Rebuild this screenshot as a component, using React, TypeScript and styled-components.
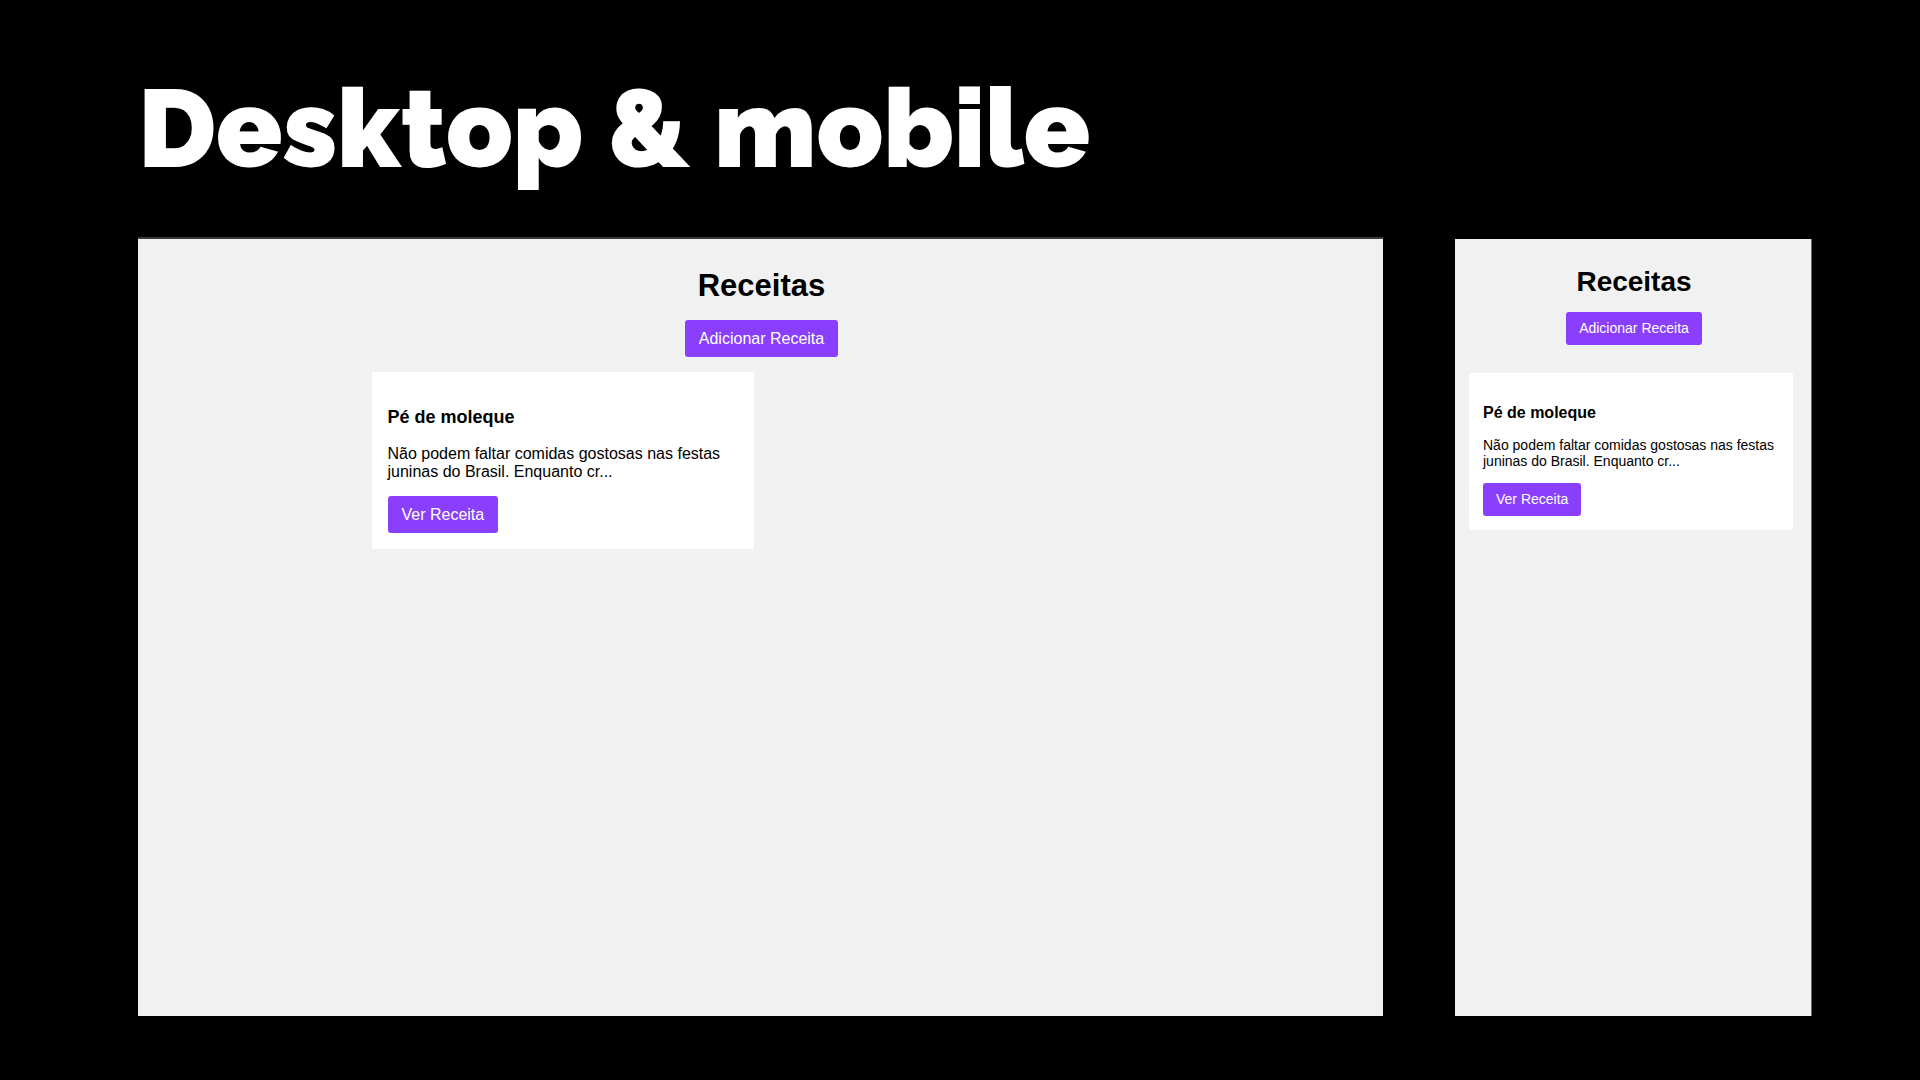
import React from "react";
import styled, { createGlobalStyle, css } from "styled-components";

type Size = "desktop" | "mobile";

const sizes = {
  desktop: {
    top: 29, title: 31, titleLine: 36, titleGap: 16, listGap: 15,
    pad: 16, name: 18, nameLine: 21, nameTop: 19, nameGap: 17,
    text: 16, textLine: 18, textGap: 15, buttonLine: 19, buttonX: 14, buttonY: 9,
  },
  mobile: {
    top: 27, title: 28, titleLine: 32, titleGap: 14, listGap: 28,
    pad: 14, name: 16, nameLine: 18, nameTop: 17, nameGap: 15,
    text: 14, textLine: 16, textGap: 14, buttonLine: 17, buttonX: 13, buttonY: 8,
  },
};

const GlobalStyle = createGlobalStyle`
  *, *::before, *::after { box-sizing: border-box; }
  body { margin: 0; background: #000; }
`;

const Slide = styled.main`
  display: flex;
  flex-direction: column;
  min-height: 100vh;
  padding: 65px 108px 64px 138px;
  background: #000;
  font-family: "Liberation Sans", Arial, sans-serif;
`;

const SlideTitle = styled.h1`
  margin: 0 0 44px;
  color: #fff;
  font-family: Raleway, Inter, sans-serif;
  font-size: 109px;
  font-weight: 900;
  line-height: 128px;
`;

const Screens = styled.div`
  flex: 1;
  display: grid;
  grid-template-columns: minmax(0, 1245fr) minmax(0, 357fr);
  gap: 72px;
`;

const Screen = styled.section<{ $size: Size }>`
  display: flex;
  flex-direction: column;
  align-items: center;
  padding-top: ${(p) => sizes[p.$size].top}px;
  padding-left: 2px;
  background: #f1f1f1;
  color: #000;
  ${(p) =>
    p.$size === "desktop"
      ? css`border-top: 2px solid #3c3a3b;`
      : css`margin-top: 2px; border-right: 1px solid #666;`}
`;

const PageTitle = styled.h2<{ $size: Size }>`
  margin: 0 0 ${(p) => sizes[p.$size].titleGap}px;
  font-size: ${(p) => sizes[p.$size].title}px;
  line-height: ${(p) => sizes[p.$size].titleLine}px;
`;

const Button = styled.button<{ $size: Size }>`
  padding: ${(p) => sizes[p.$size].buttonY}px ${(p) => sizes[p.$size].buttonX}px;
  border: 0;
  border-radius: 3px;
  background: #8a3ffc;
  color: #fff;
  font-family: inherit;
  font-size: ${(p) => sizes[p.$size].text}px;
  line-height: ${(p) => sizes[p.$size].buttonLine}px;
  cursor: pointer;
`;

const RecipeList = styled.div<{ $size: Size }>`
  display: grid;
  width: 100%;
  margin-top: ${(p) => sizes[p.$size].listGap}px;
  ${(p) =>
    p.$size === "desktop"
      ? css`
          grid-template-columns: repeat(2, minmax(0, 1fr));
          gap: 16px;
          max-width: 780px;
        `
      : css`padding: 0 18px 0 12px;`}
`;

const Card = styled.article<{ $size: Size }>`
  padding: ${(p) => sizes[p.$size].pad}px;
  border-radius: 2px;
  background: #fff;
`;

const RecipeName = styled.h3<{ $size: Size }>`
  margin: ${(p) => sizes[p.$size].nameTop}px 0 ${(p) => sizes[p.$size].nameGap}px;
  font-size: ${(p) => sizes[p.$size].name}px;
  line-height: ${(p) => sizes[p.$size].nameLine}px;
`;

const RecipeText = styled.p<{ $size: Size }>`
  margin: 0 0 ${(p) => sizes[p.$size].textGap}px;
  font-size: ${(p) => sizes[p.$size].text}px;
  line-height: ${(p) => sizes[p.$size].textLine}px;
`;

function RecipesScreen({ size }: { size: Size }) {
  return (
    <Screen $size={size}>
      <PageTitle $size={size}>Receitas</PageTitle>
      <Button type="button" $size={size}>Adicionar Receita</Button>
      <RecipeList $size={size}>
        <Card $size={size}>
          <RecipeName $size={size}>Pé de moleque</RecipeName>
          <RecipeText $size={size}>
            Não podem faltar comidas gostosas nas festas juninas do Brasil. Enquanto cr...
          </RecipeText>
          <Button type="button" $size={size}>Ver Receita</Button>
        </Card>
      </RecipeList>
    </Screen>
  );
}

export default function App() {
  return (
    <>
      <GlobalStyle />
      <Slide>
        <SlideTitle>Desktop &amp; mobile</SlideTitle>
        <Screens>
          <RecipesScreen size="desktop" />
          <RecipesScreen size="mobile" />
        </Screens>
      </Slide>
    </>
  );
}
